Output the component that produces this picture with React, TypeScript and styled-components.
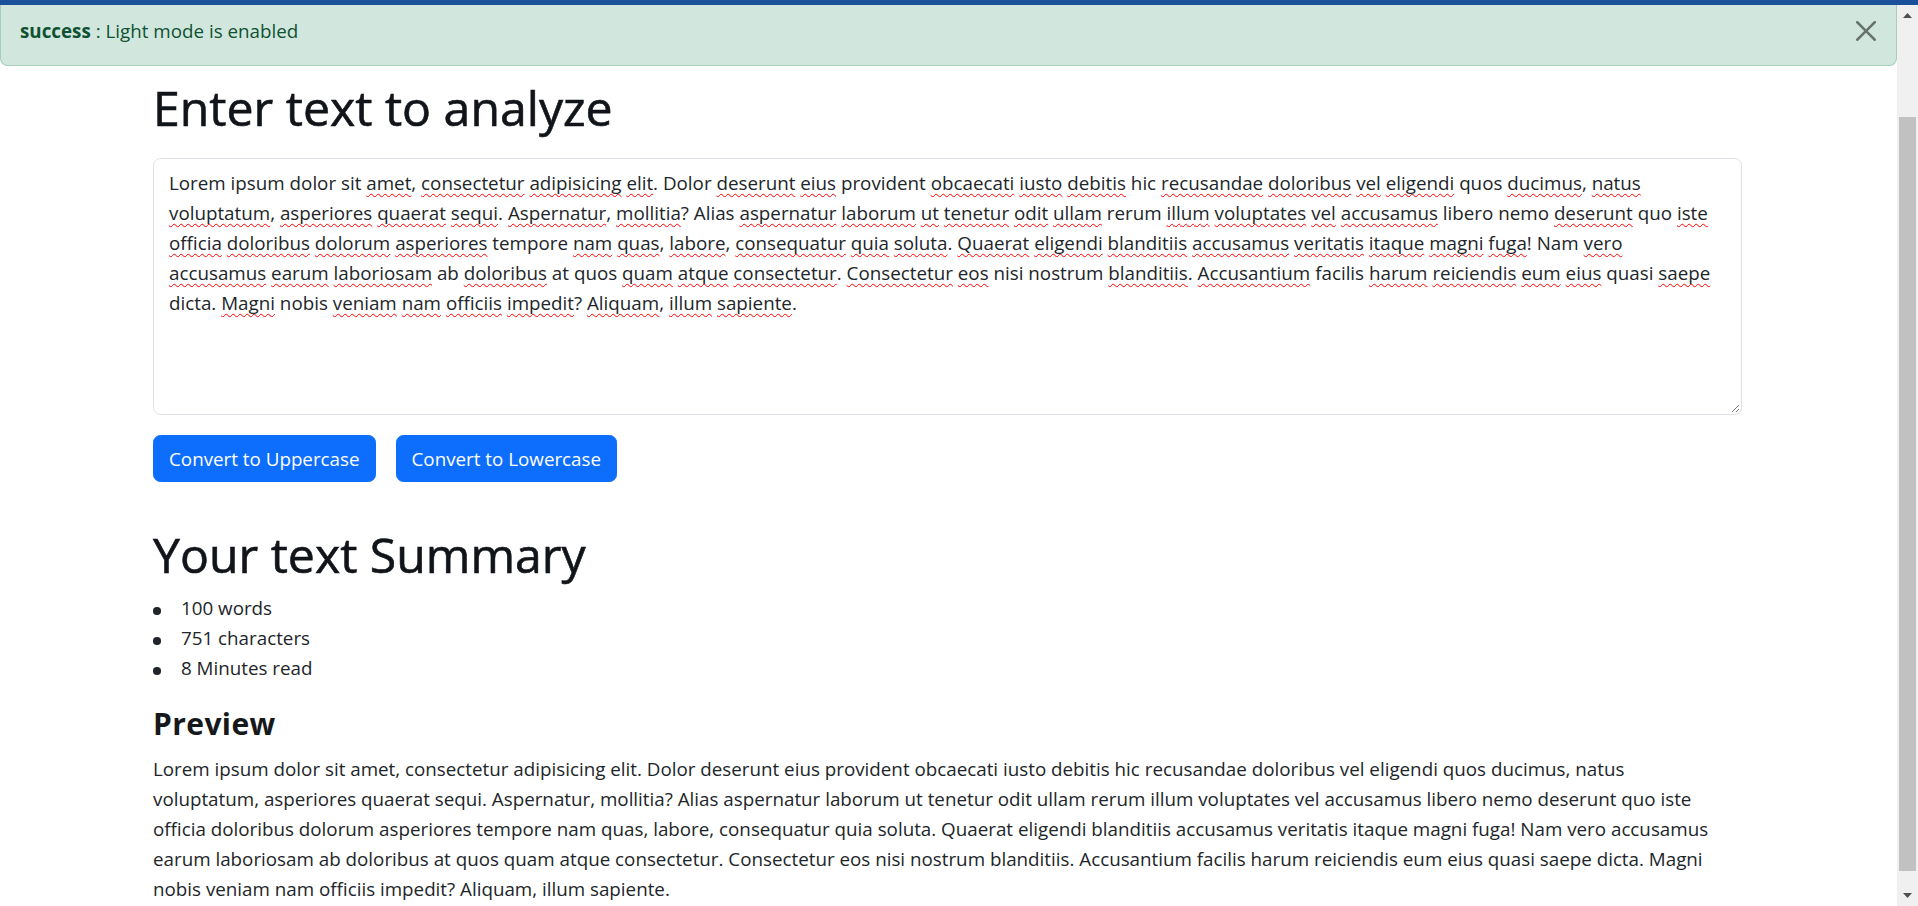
import React from "react";
import styled, { createGlobalStyle } from "styled-components";

const GlobalStyle = createGlobalStyle`
  html, body {
    margin: 0;
    padding: 0;
    height: 100%;
    overflow: hidden;
    background: #ffffff;
  }
  body {
    font-family: "Open Sans", "Noto Sans", sans-serif;
    font-size: 18.8px;
    line-height: 30px;
    color: #212529;
  }
  #root { height: 100%; }
`;

const Page = styled.div`
  display: flex;
  flex-direction: column;
  height: 906px;
`;

const TopBar = styled.div`
  height: 5px;
  flex: none;
  background: #1b519b;
`;

const Viewport = styled.div`
  flex: 1;
  display: flex;
  min-height: 0;
`;

const Main = styled.main`
  flex: 1;
  min-width: 0;
  overflow: hidden;
`;

/* ---------- Alert ---------- */
const Alert = styled.div`
  display: flex;
  align-items: center;
  justify-content: space-between;
  padding: 11px 20px 19px 19px;
  background: #d1e7dd;
  color: #0f5132;
  border: 1px solid #a3cfbb;
  border-top: 0;
  border-radius: 0 0 7.5px 7.5px;
`;

const AlertText = styled.div`
  white-space: nowrap;
`;

const AlertStrong = styled.strong`
  font-weight: 700;
`;

const CloseButton = styled.button`
  display: flex;
  align-items: center;
  justify-content: center;
  width: 20px;
  height: 20px;
  padding: 0;
  border: 0;
  background: transparent;
  opacity: 0.5;
  cursor: pointer;
`;

/* ---------- Content ---------- */
const Container = styled.div`
  padding: 0 155px 0 153px;
`;

const Title = styled.h1<{ $top: number }>`
  margin: ${(p) => p.$top}px 0 0;
  font-size: 48.2px;
  line-height: 58px;
  font-weight: 400;
  color: #111418;
  -webkit-text-stroke: 0.6px #111418;
  white-space: nowrap;
`;

const SubTitle = styled.h4`
  margin: 23px 0 0;
  font-size: 30px;
  line-height: 36px;
  font-weight: 700;
  letter-spacing: 0.4px;
  color: #16191c;
`;

const EditorBox = styled.div`
  position: relative;
  margin-top: 22px;
  height: 257px;
  box-sizing: border-box;
  padding: 8.5px 15px 7.5px;
  border: 1px solid #dee2e6;
  border-radius: 7.5px;
  background: #fff;
  color: #212529;
  overflow: hidden;
  outline: none;
`;

const Line = styled.span`
  display: block;
  white-space: nowrap;
`;

const Miss = styled.span`
  text-decoration-line: underline;
  text-decoration-style: wavy;
  text-decoration-color: #ff0000;
  text-decoration-thickness: 1px;
  text-underline-offset: 3px;
  text-decoration-skip-ink: none;
`;

const ResizeGrip = styled.svg`
  position: absolute;
  right: 1px;
  bottom: 1px;
  width: 10px;
  height: 10px;
`;

const ButtonRow = styled.div`
  display: flex;
  gap: 20px;
  margin-top: 20px;
`;

const PrimaryButton = styled.button`
  font-family: inherit;
  font-size: 18.8px;
  line-height: 30px;
  padding: 7.5px 15px;
  border: 1px solid #0d6efd;
  border-radius: 7.5px;
  background: #0d6efd;
  color: #fff;
  cursor: pointer;
  white-space: nowrap;
`;

const StatList = styled.ul`
  list-style: none;
  margin: 10px 0 0;
  padding: 0 0 0 28px;
`;

const StatItem = styled.li`
  position: relative;
  &::before {
    content: "";
    position: absolute;
    left: -28px;
    top: 14px;
    width: 7.5px;
    height: 7.5px;
    border-radius: 50%;
    background: #212529;
  }
`;

const Paragraph = styled.p`
  margin: 12px 0 0;
`;

/* ---------- Scrollbar ---------- */
const ScrollBar = styled.div`
  flex: none;
  width: 21px;
  display: flex;
  flex-direction: column;
  background: #f0f0f0;
`;

const ScrollArrow = styled.div`
  flex: none;
  height: 21px;
  display: flex;
  align-items: center;
  justify-content: center;
`;

const ScrollTrack = styled.div`
  flex: 1;
  display: flex;
  flex-direction: column;
  padding: 0 2px;
`;

const ScrollThumb = styled.div`
  margin-top: 91px;
  height: 754px;
  background: #c1c1c1;
`;

/* ---------- Data ---------- */
const MISSPELLED = new Set(
  (
    "amet consectetur adipisicing elit deserunt eius obcaecati iusto debitis recusandae doloribus vel eligendi ducimus natus " +
    "voluptatum asperiores quaerat sequi Aspernatur mollitia aspernatur laborum ut tenetur odit ullam illum voluptates accusamus iste " +
    "officia dolorum nam quas labore consequatur quia soluta Quaerat blanditiis veritatis itaque magni fuga vero " +
    "earum laboriosam quam atque Consectetur eos Accusantium harum reiciendis eum saepe " +
    "Magni veniam officiis impedit Aliquam sapiente"
  ).split(" ")
);

const EDITOR_LINES = [
  "Lorem ipsum dolor sit amet, consectetur adipisicing elit. Dolor deserunt eius provident obcaecati iusto debitis hic recusandae doloribus vel eligendi quos ducimus, natus",
  "voluptatum, asperiores quaerat sequi. Aspernatur, mollitia? Alias aspernatur laborum ut tenetur odit ullam rerum illum voluptates vel accusamus libero nemo deserunt quo iste",
  "officia doloribus dolorum asperiores tempore nam quas, labore, consequatur quia soluta. Quaerat eligendi blanditiis accusamus veritatis itaque magni fuga! Nam vero",
  "accusamus earum laboriosam ab doloribus at quos quam atque consectetur. Consectetur eos nisi nostrum blanditiis. Accusantium facilis harum reiciendis eum eius quasi saepe",
  "dicta. Magni nobis veniam nam officiis impedit? Aliquam, illum sapiente.",
];

const PREVIEW_LINES = [
  "Lorem ipsum dolor sit amet, consectetur adipisicing elit. Dolor deserunt eius provident obcaecati iusto debitis hic recusandae doloribus vel eligendi quos ducimus, natus",
  "voluptatum, asperiores quaerat sequi. Aspernatur, mollitia? Alias aspernatur laborum ut tenetur odit ullam rerum illum voluptates vel accusamus libero nemo deserunt quo iste",
  "officia doloribus dolorum asperiores tempore nam quas, labore, consequatur quia soluta. Quaerat eligendi blanditiis accusamus veritatis itaque magni fuga! Nam vero accusamus",
  "earum laboriosam ab doloribus at quos quam atque consectetur. Consectetur eos nisi nostrum blanditiis. Accusantium facilis harum reiciendis eum eius quasi saepe dicta. Magni",
  "nobis veniam nam officiis impedit? Aliquam, illum sapiente.",
];

const STATS = ["100 words", "751 characters", "8 Minutes read"];

function checkedLine(line: string) {
  return line.split(/([A-Za-z]+)/).map((part, i) =>
    MISSPELLED.has(part) ? <Miss key={i}>{part}</Miss> : <React.Fragment key={i}>{part}</React.Fragment>
  );
}

function CloseIcon() {
  return (
    <svg width="20" height="20" viewBox="0 0 16 16" aria-hidden="true">
      <path
        fill="#000"
        d="M.293.293a1 1 0 0 1 1.414 0L8 6.586 14.293.293a1 1 0 1 1 1.414 1.414L9.414 8l6.293 6.293a1 1 0 0 1-1.414 1.414L8 9.414l-6.293 6.293a1 1 0 0 1-1.414-1.414L6.586 8 .293 1.707a1 1 0 0 1 0-1.414z"
      />
    </svg>
  );
}

export default function App() {
  return (
    <Page>
      <GlobalStyle />
      <TopBar />
      <Viewport>
        <Main>
          <Alert role="alert">
            <AlertText>
              <AlertStrong>success</AlertStrong> : Light mode is enabled
            </AlertText>
            <CloseButton aria-label="Close">
              <CloseIcon />
            </CloseButton>
          </Alert>

          <Container>
            <Title $top={12}>Enter text to analyze</Title>
            <EditorBox role="textbox" aria-multiline="true" contentEditable suppressContentEditableWarning spellCheck={false}>
              {EDITOR_LINES.map((l, i) => (
                <Line key={i}>{checkedLine(l)}</Line>
              ))}
              <ResizeGrip viewBox="0 0 10 10" contentEditable={false}>
                <path d="M9 2 L2 9 M9 6 L6 9" stroke="#7a7a7a" strokeWidth="1" fill="none" />
              </ResizeGrip>
            </EditorBox>

            <ButtonRow>
              <PrimaryButton>Convert to Uppercase</PrimaryButton>
              <PrimaryButton>Convert to Lowercase</PrimaryButton>
            </ButtonRow>

            <Title $top={43}>Your text Summary</Title>
            <StatList>
              {STATS.map((s) => (
                <StatItem key={s}>{s}</StatItem>
              ))}
            </StatList>

            <SubTitle>Preview</SubTitle>
            <Paragraph>
              {PREVIEW_LINES.map((l, i) => (
                <Line key={i}>{l}</Line>
              ))}
            </Paragraph>
          </Container>
        </Main>

        <ScrollBar aria-hidden="true">
          <ScrollArrow>
            <svg width="9" height="5" viewBox="0 0 9 5">
              <polygon points="0,5 9,5 4.5,0" fill="#505050" />
            </svg>
          </ScrollArrow>
          <ScrollTrack>
            <ScrollThumb />
          </ScrollTrack>
          <ScrollArrow>
            <svg width="9" height="5" viewBox="0 0 9 5">
              <polygon points="0,0 9,0 4.5,5" fill="#505050" />
            </svg>
          </ScrollArrow>
        </ScrollBar>
      </Viewport>
    </Page>
  );
}
